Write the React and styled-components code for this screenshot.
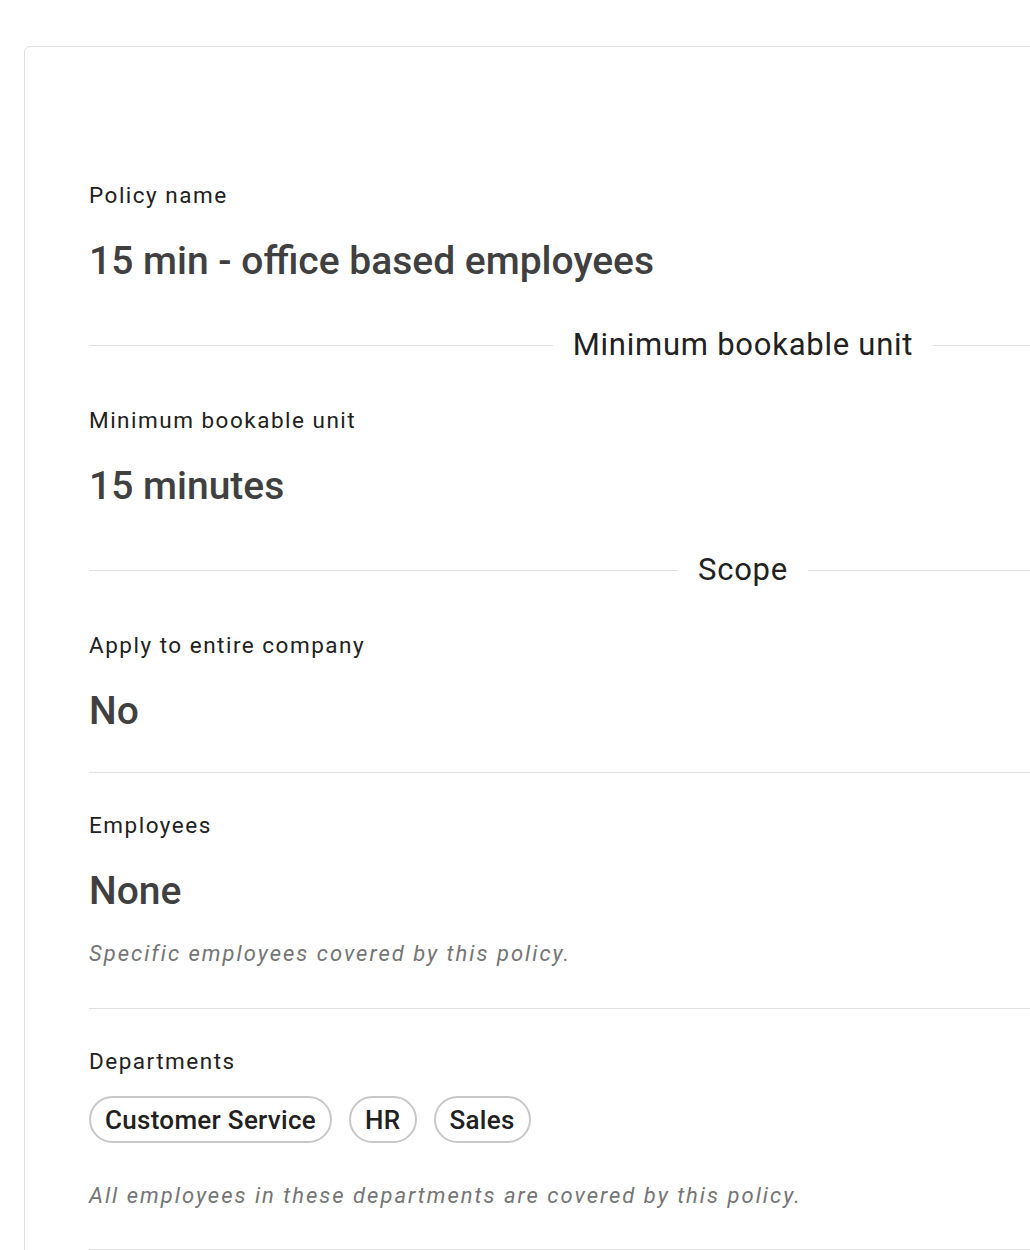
import React from "react";
import styled, { createGlobalStyle } from "styled-components";

const GlobalStyle = createGlobalStyle`
  html, body {
    margin: 0;
    padding: 0;
    background: #ffffff;
    overflow: hidden;
  }
  body {
    font-family: Roboto, "Liberation Sans", Arial, sans-serif;
    -webkit-font-smoothing: antialiased;
  }
`;

const Page = styled.div`
  padding: 46px 0 0 24px;
  width: 1500px;
`;

const Card = styled.div`
  width: 1438px;
  box-sizing: border-box;
  border: 1px solid #e0e0e0;
  border-radius: 6px;
  padding: 130px 64px 40px;
  background: #fff;
`;

const Field = styled.div`
  display: flex;
  flex-direction: column;
  align-items: flex-start;
  padding-bottom: ${(p) => p.$pad || 39}px;
`;

const Label = styled.div`
  font-size: 22.5px;
  line-height: 36px;
  letter-spacing: 1.5px;
  color: #212121;
`;

const Value = styled.div`
  margin-top: 26px;
  font-size: 39px;
  line-height: 44px;
  font-weight: 500;
  color: #404040;
`;

const Helper = styled.div`
  margin-top: ${(p) => p.$gap || 26}px;
  font-size: 22px;
  line-height: 30px;
  font-style: italic;
  letter-spacing: 2px;
  color: #757575;
`;

const Rule = styled.hr`
  margin: 0 0 34px;
  border: none;
  border-top: 1px solid #e0e0e0;
`;

const SectionDivider = styled.div`
  display: flex;
  align-items: center;
  margin: 5px 0 39px;

  &::before,
  &::after {
    content: "";
    flex: 1;
    border-top: 1px solid #e0e0e0;
  }
`;

const SectionTitle = styled.span`
  padding: 0 20px;
  font-size: 31px;
  line-height: 36px;
  letter-spacing: 0.75px;
  color: #212121;
`;

const Chips = styled.div`
  display: flex;
  gap: 17px;
  margin-top: 17px;
`;

const Chip = styled.span`
  display: inline-flex;
  align-items: center;
  height: 47px;
  box-sizing: border-box;
  padding: 0 14px;
  border: 2px solid #c8c8c8;
  border-radius: 24px;
  font-size: 26px;
  font-weight: 500;
  letter-spacing: 0.3px;
  color: #212121;
`;

const departments = ["Customer Service", "HR", "Sales"];

const App = () => {
  return (
    <>
      <GlobalStyle />
      <Page>
        <Card>
          <Field>
            <Label>Policy name</Label>
            <Value>15 min - office based employees</Value>
          </Field>

          <SectionDivider>
            <SectionTitle>Minimum bookable unit</SectionTitle>
          </SectionDivider>

          <Field>
            <Label>Minimum bookable unit</Label>
            <Value>15 minutes</Value>
          </Field>

          <SectionDivider>
            <SectionTitle>Scope</SectionTitle>
          </SectionDivider>

          <Field>
            <Label>Apply to entire company</Label>
            <Value>No</Value>
          </Field>
          <Rule />

          <Field>
            <Label>Employees</Label>
            <Value>None</Value>
            <Helper>Specific employees covered by this policy.</Helper>
          </Field>
          <Rule />

          <Field $pad={38}>
            <Label>Departments</Label>
            <Chips>
              {departments.map((d) => (
                <Chip key={d}>{d}</Chip>
              ))}
            </Chips>
            <Helper $gap={38}>
              All employees in these departments are covered by this policy.
            </Helper>
          </Field>
          <Rule />
        </Card>
      </Page>
    </>
  );
};

export default App;
